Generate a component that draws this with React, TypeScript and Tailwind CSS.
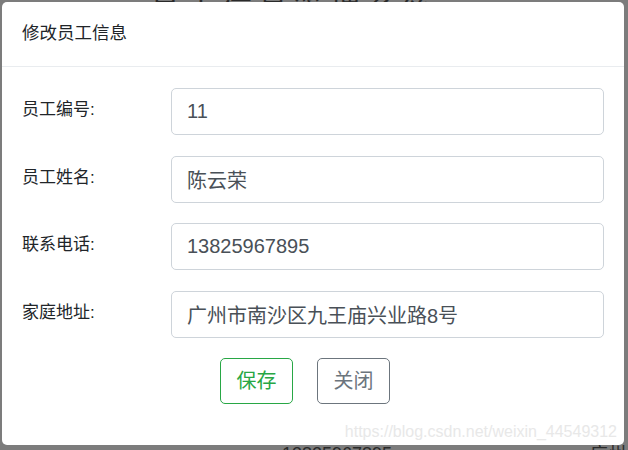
import React from 'react';

const fields = [
  { label: '员工编号:', value: '11' },
  { label: '员工姓名:', value: '陈云荣' },
  { label: '联系电话:', value: '13825967895' },
  { label: '家庭地址:', value: '广州市南沙区九王庙兴业路8号' },
];

const font = { fontFamily: '"Liberation Sans", "Noto Sans CJK SC", sans-serif' };

export default function App() {
  return (
    <div className="relative w-[628px] h-[450px] overflow-hidden bg-[#7c7c7c]" style={font}>
      {/* 背景页面的残影 */}
      <div className="absolute top-[-14px] left-[150px] text-[30px] text-[#2a2a2a] tracking-[6px]">员工信息管理系统</div>
      <div className="absolute top-[441px] left-[282px] text-[18px] text-[#2a2a2a]">13825967895</div>
      <div className="absolute top-[441px] left-[590px] text-[18px] text-[#2a2a2a]">广州</div>

      {/* 弹窗 */}
      <div className="absolute left-[2px] top-[2px] w-[622px] h-[443px] bg-white rounded-[5px] flex flex-col">
        <div className="h-[65px] border-b border-[#e9ecef] flex items-center px-[20px] pb-[1px]">
          <span className="text-[17.5px] text-[#212529]">修改员工信息</span>
        </div>

        <div className="flex flex-col gap-[20.5px] pt-[21px] pl-[20px] pr-[20px]">
          {fields.map((f) => (
            <div key={f.label} className="flex items-start h-[47px]">
              <label className="w-[149px] pt-[9px] text-[17px] text-[#212529]">{f.label}</label>
              <input
                readOnly
                value={f.value}
                className="w-[433px] h-[47px] px-[15px] text-[20px] text-[#495057] border border-[#ced4da] rounded-[5px] outline-none"
                style={font}
              />
            </div>
          ))}
        </div>

        <div className="flex gap-[24px] pl-[218px] pt-[20px]">
          <button className="w-[73px] h-[46px] text-[20px] text-[#28a745] border border-[#28a745] rounded-[5px]">保存</button>
          <button className="w-[73px] h-[46px] text-[20px] text-[#6c757d] border border-[#6c757d] rounded-[5px]">关闭</button>
        </div>

        <div className="absolute right-[7px] bottom-[5px] text-[16px] leading-none text-[#e8e8e8]">https://blog.csdn.net/weixin_44549312</div>
      </div>
    </div>
  );
}
